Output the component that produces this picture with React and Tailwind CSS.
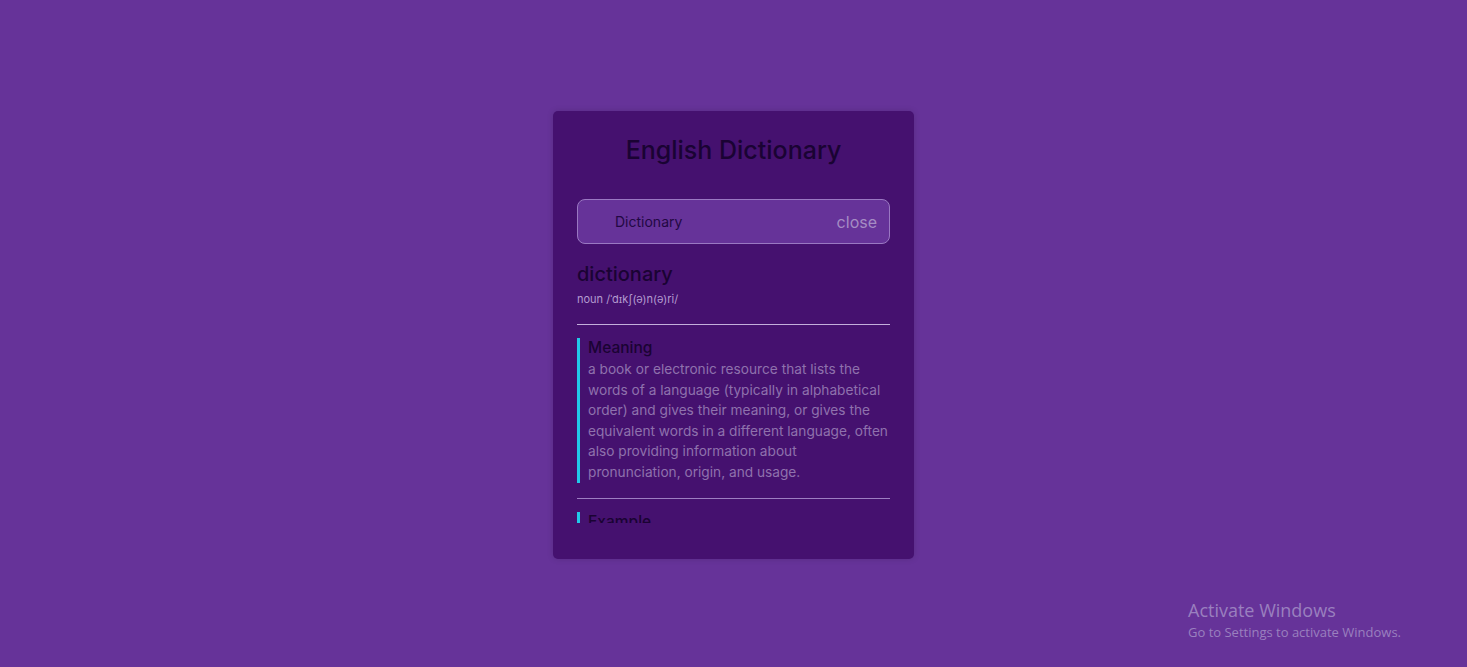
export default function App() {
  return (
    <div className="relative min-h-screen w-full bg-[#663399] flex items-center justify-center" style={{ fontFamily: 'Inter, "Noto Sans", sans-serif' }}>
      <div className="mt-[3px] w-[361px] h-[448px] rounded-[5px] bg-[#45116f] px-6 pt-[22px] shadow-[0_0_6px_rgba(0,0,0,0.15)]">
        <h1 className="text-center text-[25px] leading-[34px] font-medium text-[#1a0333]">English Dictionary</h1>
        <div className="mt-[32px] h-[45px] rounded-lg border border-[#9a78c2] bg-[#663399] flex items-center pl-[37px] pr-3">
          <span className="flex-1 text-[14px] text-[#220843]">Dictionary</span>
          <span className="text-[16px] text-[#a58cc4]">close</span>
        </div>
        <div className="mt-[17px] h-[262px] overflow-hidden">
          <div className="text-[20px] leading-[26px] font-medium text-[#1a0333]">dictionary</div>
          <div className="mt-[4px] text-[11px] leading-[16px] text-[#b49bd0]">noun /ˈdɪkʃ(ə)n(ə)ri/</div>
          <div className="mt-[17px] h-px bg-[#c4afdc]"></div>
          <div className="mt-[13px] border-l-[3px] border-[#22c8e8] pl-[8px]">
            <div className="text-[15.5px] leading-[20px] font-medium text-[#1a0333]">Meaning</div>
            <p className="mt-[1px] text-[13.7px] leading-[20.6px] text-[#8f71ad]">
              a book or electronic resource that lists the words of a language (typically in alphabetical order) and gives their meaning, or gives the equivalent words in a different language, often also providing information about pronunciation, origin, and usage.
            </p>
          </div>
          <div className="mt-[15px] h-px bg-[#9d7ec2]"></div>
          <div className="mt-[13px] border-l-[3px] border-[#22c8e8] pl-[8px]">
            <div className="text-[15.5px] leading-[20px] font-medium text-[#1a0333]">Example</div>
          </div>
        </div>
      </div>
      <div className="absolute left-[1188px] top-[598px] text-[#9a80bf]" style={{ fontFamily: '"Open Sans", "Noto Sans", sans-serif' }}>
        <div className="text-[18px] leading-[24px]">Activate Windows</div>
        <div className="text-[13px] leading-[20px]">Go to Settings to activate Windows.</div>
      </div>
    </div>
  );
}
